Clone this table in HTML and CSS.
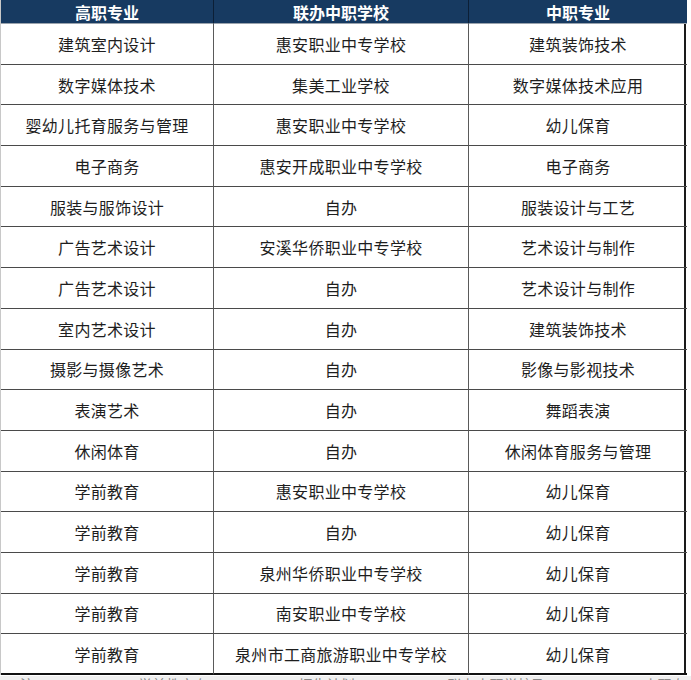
FILE: index.html
```html
<!DOCTYPE html>
<html lang="zh">
<head>
<meta charset="utf-8">
<link rel="stylesheet" href="styles.css">
</head>
<body>
<div class="table">
  <div class="th">高职专业</div><div class="th">联办中职学校</div><div class="th last">中职专业</div>
  <div class="td">建筑室内设计</div><div class="td">惠安职业中专学校</div><div class="td last">建筑装饰技术</div>
  <div class="td">数字媒体技术</div><div class="td">集美工业学校</div><div class="td last">数字媒体技术应用</div>
  <div class="td">婴幼儿托育服务与管理</div><div class="td">惠安职业中专学校</div><div class="td last">幼儿保育</div>
  <div class="td">电子商务</div><div class="td">惠安开成职业中专学校</div><div class="td last">电子商务</div>
  <div class="td">服装与服饰设计</div><div class="td">自办</div><div class="td last">服装设计与工艺</div>
  <div class="td">广告艺术设计</div><div class="td">安溪华侨职业中专学校</div><div class="td last">艺术设计与制作</div>
  <div class="td">广告艺术设计</div><div class="td">自办</div><div class="td last">艺术设计与制作</div>
  <div class="td">室内艺术设计</div><div class="td">自办</div><div class="td last">建筑装饰技术</div>
  <div class="td">摄影与摄像艺术</div><div class="td">自办</div><div class="td last">影像与影视技术</div>
  <div class="td">表演艺术</div><div class="td">自办</div><div class="td last">舞蹈表演</div>
  <div class="td">休闲体育</div><div class="td">自办</div><div class="td last">休闲体育服务与管理</div>
  <div class="td">学前教育</div><div class="td">惠安职业中专学校</div><div class="td last">幼儿保育</div>
  <div class="td">学前教育</div><div class="td">自办</div><div class="td last">幼儿保育</div>
  <div class="td">学前教育</div><div class="td">泉州华侨职业中专学校</div><div class="td last">幼儿保育</div>
  <div class="td">学前教育</div><div class="td">南安职业中专学校</div><div class="td last">幼儿保育</div>
  <div class="td end">学前教育</div><div class="td end">泉州市工商旅游职业中专学校</div><div class="td end last">幼儿保育</div>
</div>
<div class="footer">
  <span>注：</span><span>学前教育专业</span><span>招生计划含</span><span>联办中职学校及自办</span><span>中职专业</span>
</div>
</body>
</html>
```

FILE: styles.css
```css
html, body {
  margin: 0;
  padding: 0;
  background: #ffffff;
  overflow: hidden;
}
body {
  width: 691px;
  height: 680px;
  font-family: "Noto Sans CJK SC", "Noto Sans", sans-serif;
}
.table {
  display: grid;
  grid-template-columns: 213px 255px 218px;
  grid-template-rows: 24px repeat(16, 40.69px);
  width: 686px;
  box-sizing: border-box;
  border-left: 1px solid #c8c8c8;
  border-right: 2px solid #1a1a1a;
}
.th, .td {
  display: flex;
  align-items: center;
  justify-content: center;
  box-sizing: border-box;
  border-right: 1px solid #5a5a5a;
  border-bottom: 1px solid #4a4a4a;
  white-space: nowrap;
}
.th {
  background: #173a61;
  color: #ffffff;
  font-weight: 700;
  font-size: 16px;
  border-right-color: #0c1f36;
  border-bottom: 1px solid #9aa3ad;
  padding-top: 1px;
}
.td {
  font-size: 16px;
  color: #1e1e1e;
  letter-spacing: 0.3px;
}
.last {
  border-right: none;
}
.td.end {
  border-bottom: 2px solid #111111;
}
.footer {
  display: flex;
  gap: 90px;
  background: #efefef;
  height: 5px;
  overflow: hidden;
  margin-top: 1px;
  padding-left: 20px;
  font-size: 14px;
  line-height: 14px;
  color: #888888;
}
.footer span {
  display: block;
  margin-top: 1px;
}
```
